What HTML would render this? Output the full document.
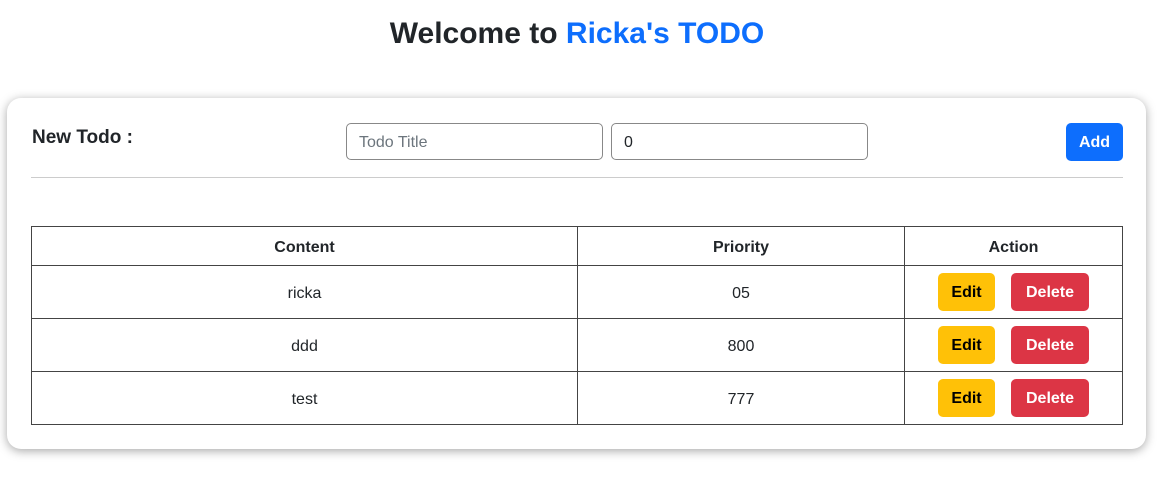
<!DOCTYPE html>
<html><head><style>
*{box-sizing:border-box;margin:0;padding:0}
body{width:1171px;height:485px;background:#fff;font-family:"Liberation Sans","Noto Sans CJK JP",sans-serif;color:#212529;position:relative;overflow:hidden}
.a{position:absolute}
h1{position:absolute;left:0;width:1154px;top:15px;text-align:center;font-size:30px;font-weight:bold;line-height:38px}
h1 span{color:#0d6efd}
.card{left:7px;top:98px;width:1139px;height:351px;border-radius:14px;background:#fff;box-shadow:0 2px 10px rgba(0,0,0,.35)}
.inp{height:37px;border:1px solid #888;border-radius:5px;font-size:16px;line-height:37px;padding-left:12px}
.btn{border-radius:5px;font-weight:bold;font-size:16px;text-align:center;color:#fff}
table{position:absolute;left:31px;top:226px;width:1092px;border-collapse:collapse;font-size:16px}
td,th{border:1px solid #444;text-align:center;height:53px;padding-top:3px}
th{height:39px}
</style></head><body>
<h1>Welcome to <span>Ricka's TODO</span></h1>
<div class="a card"></div>
<div class="a" style="left:32px;top:127px;font-size:19px;font-weight:bold">New Todo :</div>
<div class="a inp" style="left:346px;top:123px;width:257px;color:#6c757d">Todo Title</div>
<div class="a inp" style="left:611px;top:123px;width:257px">0</div>
<div class="a btn" style="left:1066px;top:123px;width:57px;height:38px;line-height:40px;background:#0d6efd">Add</div>
<div class="a" style="left:31px;top:177px;width:1092px;height:1px;background:#ccc"></div>
<table>
<tr><th style="width:546px">Content</th><th style="width:327px">Priority</th><th>Action</th></tr>
<tr><td>ricka</td><td>05</td><td></td></tr>
<tr><td>ddd</td><td>800</td><td></td></tr>
<tr><td>test</td><td>777</td><td></td></tr>
</table>
<div class="a btn" style="left:938px;top:273px;width:57px;height:38px;line-height:40px;background:#ffc107;color:#000">Edit</div>
<div class="a btn" style="left:1011px;top:273px;width:78px;height:38px;line-height:40px;background:#dc3545">Delete</div>
<div class="a btn" style="left:938px;top:326px;width:57px;height:38px;line-height:40px;background:#ffc107;color:#000">Edit</div>
<div class="a btn" style="left:1011px;top:326px;width:78px;height:38px;line-height:40px;background:#dc3545">Delete</div>
<div class="a btn" style="left:938px;top:379px;width:57px;height:38px;line-height:40px;background:#ffc107;color:#000">Edit</div>
<div class="a btn" style="left:1011px;top:379px;width:78px;height:38px;line-height:40px;background:#dc3545">Delete</div>
</body></html>
